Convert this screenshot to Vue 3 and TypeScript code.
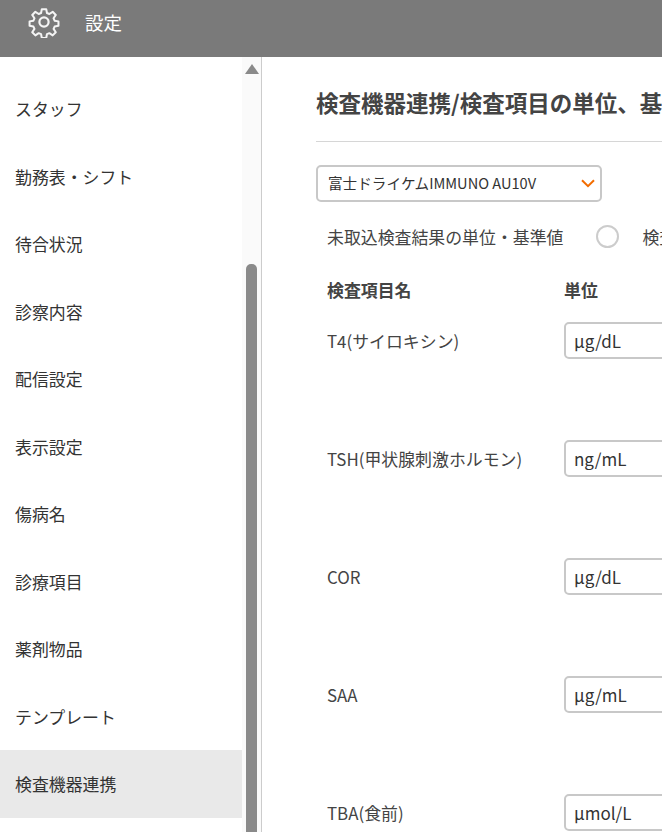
<script setup lang="ts">
const menu: string[] = ['スタッフ','勤務表・シフト','待合状況','診察内容','配信設定','表示設定','傷病名','診療項目','薬剤物品','テンプレート','検査機器連携']
const rows: { name: string; unit: string }[] = [
  { name: 'T4(サイロキシン)', unit: 'µg/dL' },
  { name: 'TSH(甲状腺刺激ホルモン)', unit: 'ng/mL' },
  { name: 'COR', unit: 'µg/dL' },
  { name: 'SAA', unit: 'µg/mL' },
  { name: 'TBA(食前)', unit: 'µmol/L' },
]
</script>

<template>
  <div class="page">
    <header class="topbar">
      <svg class="gear" viewBox="0 0 32 32" width="32" height="32" fill="none" stroke="#f4f4f4" stroke-width="2.2" stroke-linejoin="round">
        <path d="M13.6 2h4.8l.8 4.2 2.6 1.1 3.6-2.4 3.4 3.4-2.4 3.6 1.1 2.6 4.2.8v4.8l-4.2.8-1.1 2.6 2.4 3.6-3.4 3.4-3.6-2.4-2.6 1.1-.8 4.2h-4.8l-.8-4.2-2.6-1.1-3.6 2.4-3.4-3.4 2.4-3.6-1.1-2.6-4.2-.8v-4.8l4.2-.8 1.1-2.6-2.4-3.6 3.4-3.4 3.6 2.4 2.6-1.1z" transform="translate(1.3 1.3) scale(.92)"/>
        <circle cx="16" cy="16" r="4.6"/>
      </svg>
      <span class="title">設定</span>
    </header>
    <div class="body">
      <aside class="sidebar">
        <ul class="menu">
          <li v-for="(m, i) in menu" :key="m" class="item" :class="{ active: i === menu.length - 1 }">{{ m }}</li>
        </ul>
        <div class="track">
          <span class="arrow"></span>
          <span class="thumb"></span>
        </div>
      </aside>
      <main class="main">
        <h1 class="heading">検査機器連携/検査項目の単位、基準値設定</h1>
        <div class="selectbox">
          <span>富士ドライケムIMMUNO AU10V</span>
          <svg class="chev" viewBox="0 0 14 9" width="14" height="9" fill="none" stroke="#f26c00" stroke-width="2"><path d="M1 1.2l6 6 6-6"/></svg>
        </div>
        <div class="radios">
          <span class="radiolabel">未取込検査結果の単位・基準値</span>
          <span class="radio"></span>
          <span class="radiotext">検査結果の単位・基準値</span>
        </div>
        <div class="thead">
          <span class="cname">検査項目名</span>
          <span>単位</span>
        </div>
        <div v-for="r in rows" :key="r.name" class="row">
          <span class="cname">{{ r.name }}</span>
          <span class="unit">{{ r.unit }}</span>
        </div>
      </main>
    </div>
  </div>
</template>

<style>
html, body { margin: 0; overflow: hidden; }
</style>

<style scoped>
.page {
  width: 662px;
  height: 832px;
  overflow: hidden;
  font-family: "Noto Sans CJK JP", "Noto Sans", sans-serif;
  color: #333;
  background: #fff;
}
.topbar {
  height: 57px;
  background: #7a7a7a;
  display: flex;
  align-items: center;
  padding: 0 0 13px 28px;
  box-sizing: border-box;
}
.gear { display: block; }
.title { color: #fff; font-size: 18.5px; margin-left: 25px; line-height: 1; }
.body { display: flex; height: 775px; }
.sidebar {
  width: 262px;
  flex: none;
  display: flex;
  border-right: 1px solid #ccc;
  box-sizing: border-box;
  overflow: hidden;
}
.menu { list-style: none; margin: 0; padding: 18px 0 0; width: 242px; flex: none; }
.item {
  height: 67.5px;
  display: flex;
  align-items: center;
  padding-left: 15px;
  font-size: 16.9px;
  color: #333;
}
.item.active { background: #e9e9e9; }
.track {
  flex: 1;
  background: #fafafa;
  display: flex;
  flex-direction: column;
  align-items: center;
  padding-top: 7px;
}
.arrow {
  width: 0; height: 0;
  border-left: 7px solid transparent;
  border-right: 7px solid transparent;
  border-bottom: 10px solid #8a8a8a;
}
.thumb {
  width: 11px;
  margin-top: 190px;
  flex: 1;
  background: #8a8a8a;
  border-radius: 5px 5px 0 0;
}
.main { flex: 1; min-width: 0; padding-left: 54px; overflow: hidden; }
.heading {
  margin: 0;
  padding: 31px 0 25px;
  font-size: 22.5px;
  line-height: 28px;
  font-weight: 700;
  white-space: nowrap;
  border-bottom: 1px solid #d6d6d6;
  color: #444;
}
.selectbox {
  margin-top: 23px;
  width: 286px;
  height: 37px;
  box-sizing: border-box;
  border: 2px solid #c8c8c8;
  border-radius: 5px;
  display: flex;
  align-items: center;
  justify-content: space-between;
  padding: 0 5px 2px 10px;
  font-size: 14.6px;
  color: #333;
}
.chev { margin-top: 2px; }
.radios {
  display: flex;
  align-items: center;
  margin-top: 22px;
  padding-left: 11px;
  height: 24px;
  font-size: 16.9px;
  color: #444;
  white-space: nowrap;
}
.radio {
  width: 23px; height: 23px;
  box-sizing: border-box;
  border: 2px solid #ccc;
  border-radius: 50%;
  margin-left: 33px;
  flex: none;
}
.radiotext { margin-left: 23px; }
.thead {
  display: flex;
  margin-top: 30px;
  padding-left: 11px;
  font-size: 16.9px;
  font-weight: 700;
  color: #444;
  height: 24px;
  line-height: 24px;
}
.cname { width: 237px; flex: none; white-space: nowrap; }
.row {
  display: flex;
  align-items: flex-start;
  padding-left: 11px;
  height: 118px;
  font-size: 16.9px;
  color: #444;
}
.row .cname { line-height: 24px; margin-top: 7px; }
.thead + .row { margin-top: 20px; }
.unit {
  width: 200px;
  height: 37px;
  box-sizing: border-box;
  flex: none;
  border: 2px solid #c8c8c8;
  border-radius: 5px;
  padding-left: 8px;
  line-height: 34px;
  font-size: 17px;
  color: #333;
}
</style>
